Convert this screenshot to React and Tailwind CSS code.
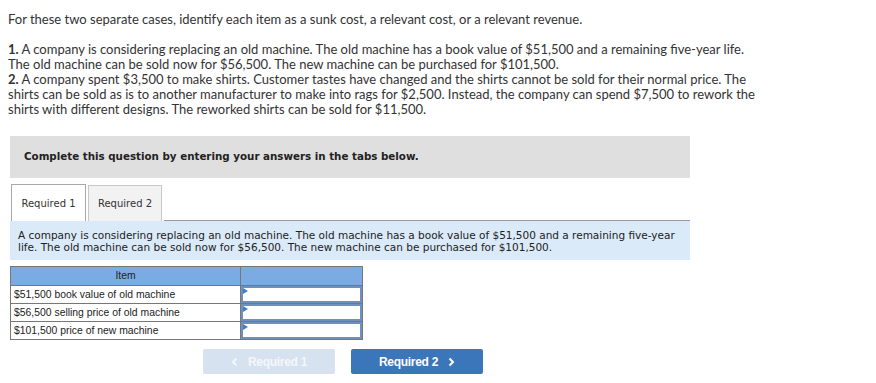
export default function App() {
  const rows = [
    "$51,500 book value of old machine",
    "$56,500 selling price of old machine",
    "$101,500 price of new machine",
  ];

  return (
    <div className="min-h-screen bg-white pt-[12px] pl-[8px] text-[#333]">
      <div style={{ fontFamily: "Lato, 'Liberation Sans', sans-serif" }} className="text-[13px] leading-[15px]">
        <p>For these two separate cases, identify each item as a sunk cost, a relevant cost, or a relevant revenue.</p>
        <div className="mt-[15px] w-[765px]">
          <p>
            <b>1.</b> A company is considering replacing an old machine. The old machine has a book value of $51,500 and a remaining five-year life.
          </p>
          <p>The old machine can be sold now for $56,500. The new machine can be purchased for $101,500.</p>
          <p>
            <b>2.</b> A company spent $3,500 to make shirts. Customer tastes have changed and the shirts cannot be sold for their normal price. The shirts can be sold as is to another manufacturer to make into rags for $2,500. Instead, the company can spend $7,500 to rework the shirts with different designs. The reworked shirts can be sold for $11,500.
          </p>
        </div>
      </div>

      <div className="ml-[2px] w-[680px]" style={{ fontFamily: "'DejaVu Sans', Verdana, sans-serif" }}>
        <div className="mt-[19px] h-[42px] bg-[#dfdfdf] flex items-center pl-[14px] text-[10.3px] font-bold text-[#222]">
          Complete this question by entering your answers in the tabs below.
        </div>

        <div className="mt-[6px] flex items-end gap-[2px] pl-[1px] text-[10px] text-[#333]">
          <div className="w-[75px] h-[37px] bg-white border border-b-0 border-[#a8a8a8] flex items-center justify-center">
            Required 1
          </div>
          <div className="w-[74px] h-[36px] bg-[#f2f2f2] border border-b-0 border-[#c8c8c8] flex items-center justify-center">
            Required 2
          </div>
          <div className="flex-1 border-b border-[#999]" />
        </div>

        <div className="bg-[#dbeaf8] px-[8px] pt-[8px] pb-[7px] text-[10.5px] leading-[12px] text-[#222]">
          A company is considering replacing an old machine. The old machine has a book value of $51,500 and a remaining five-year life. The old machine can be sold now for $56,500. The new machine can be purchased for $101,500.
        </div>
      </div>

      <table
        className="ml-[2px] mt-[6px] border-collapse text-[10.4px] text-[#222]"
        style={{ fontFamily: "'Liberation Sans', Arial, sans-serif" }}
      >
        <thead>
          <tr className="bg-[#7babe3] h-[19px]">
            <th className="w-[230px] border border-[#777] font-normal text-center">Item</th>
            <th className="w-[122px] border border-[#777]"></th>
          </tr>
        </thead>
        <tbody>
          {rows.map((r) => (
            <tr key={r} className="h-[18px]">
              <td className="border border-[#777] pl-[3px] leading-[12px]">{r}</td>
              <td className="border border-[#777] p-0">
                <div className="relative h-[17px] border-2 border-[#6f8fbd] bg-white">
                  <span className="absolute left-0 top-0 w-0 h-0 border-y-[3px] border-y-transparent border-l-[5px] border-l-[#3d7fd1]" />
                </div>
              </td>
            </tr>
          ))}
        </tbody>
      </table>

      <div
        className="mt-[9px] pl-[195px] flex gap-[16px] text-[12px] font-bold"
        style={{ fontFamily: "'Liberation Sans', Arial, sans-serif" }}
      >
        <div className="w-[132px] h-[25px] rounded-[2px] bg-[#d6e2f0] text-[#f4f7fb] flex items-center justify-center gap-[10px]">
          <svg width="7" height="10" viewBox="0 0 7 10"><path d="M5.5 1.5 L2 5 L5.5 8.5" stroke="#f4f7fb" strokeWidth="2" fill="none" /></svg>
          <span className="tracking-[-0.3px]">Required 1</span>
        </div>
        <div className="w-[132px] h-[25px] rounded-[2px] bg-[#3a76b9] text-white flex items-center justify-center gap-[10px]">
          <span className="tracking-[-0.3px]">Required 2</span>
          <svg width="7" height="10" viewBox="0 0 7 10"><path d="M1.5 1.5 L5 5 L1.5 8.5" stroke="#fff" strokeWidth="2" fill="none" /></svg>
        </div>
      </div>
    </div>
  );
}
